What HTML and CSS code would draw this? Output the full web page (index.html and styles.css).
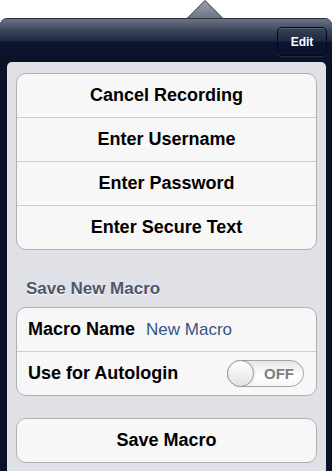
FILE: index.html
```html
<!doctype html>
<html>
<head>
  <meta charset="utf-8">
  <title>Macros</title>
  <link rel="stylesheet" href="styles.css">
</head>
<body>
  <div class="popover">
    <div class="arrow-row">
      <svg class="arrow" width="36" height="18" viewBox="0 0 36 18">
        <defs>
          <linearGradient id="arrowFill" x1="0" y1="0" x2="0" y2="1">
            <stop offset="0" stop-color="#9aa0ac"/>
            <stop offset="1" stop-color="#6c7486"/>
          </linearGradient>
        </defs>
        <polygon points="0,18.5 18,0.5 36,18.5" fill="url(#arrowFill)" stroke="#2a2f3a" stroke-width="1"/>
      </svg>
    </div>

    <div class="frame">
      <div class="header">
        <button class="edit-button">Edit</button>
      </div>

      <div class="content">
        <!-- Recording actions -->
        <div class="group">
          <div class="cell centered">Cancel Recording</div>
          <div class="cell centered">Enter Username</div>
          <div class="cell centered">Enter Password</div>
          <div class="cell centered">Enter Secure Text</div>
        </div>

        <div class="section-title">Save New Macro</div>
        <div class="group">
          <div class="cell">
            <span class="label">Macro Name</span>
            <span class="value">New Macro</span>
          </div>
          <div class="cell">
            <span class="label">Use for Autologin</span>
            <div class="switch">
              <div class="knob"></div>
              <span class="switch-text">OFF</span>
            </div>
          </div>
        </div>

        <div class="group save-group">
          <div class="cell centered">Save Macro</div>
        </div>
      </div>
    </div>
  </div>
</body>
</html>
```

FILE: styles.css
```css
body {
  margin: 0;
  background-color: #ffffff;
  font-family: "Liberation Sans", Arial, sans-serif;
  width: 335px;
  height: 471px;
  overflow: hidden;
}
.popover {
  display: flex;
  flex-direction: column;
  height: 471px;
}
.arrow-row {
  height: 18px;
  padding-left: 187px;
}
.arrow {
  display: block;
}
.frame {
  flex: 1;
  margin-right: 3px;
  background-color: #0a1228;
  border-radius: 7px 7px 0 0;
  border-top: 1px solid #2a2f3a;
  display: flex;
  flex-direction: column;
}
.header {
  height: 43px;
  background: linear-gradient(to bottom, #6c7486 0px, #3a4459 12px, #1d2740 22px, #0c1530 23px, #0a1228 43px);
  border-radius: 6px 6px 0 0;
  display: flex;
  justify-content: flex-end;
  align-items: flex-start;
  padding-right: 5px;
}
.edit-button {
  margin-top: 8px;
  width: 50px;
  height: 29px;
  border: 1px solid #050912;
  border-radius: 5px;
  background: linear-gradient(to bottom, #3b4558 0px, #1e283e 13px, #0b1431 14px, #0a1230 28px);
  box-shadow: inset 0 1px 0 rgba(255, 255, 255, 0.15), 0 1px 0 rgba(255, 255, 255, 0.12);
  color: #ffffff;
  font-family: "Liberation Sans", Arial, sans-serif;
  font-size: 12px;
  font-weight: bold;
  padding: 0;
}
.content {
  flex: 1;
  margin: 0 6px 0 7px;
  background-color: #dfe1e6;
  border-radius: 5px 5px 0 0;
  padding: 11px 9px 0 9px;
}
.group {
  background-color: #f7f7f7;
  border: 1px solid #aeb0b5;
  border-radius: 10px;
}
.cell {
  height: 43px;
  border-top: 1px solid #cdcdcf;
  display: flex;
  align-items: center;
  padding: 0 11px;
  font-size: 18px;
  font-weight: bold;
  color: #000000;
}
.cell:first-child {
  border-top: none;
  height: 43px;
}
.cell.centered {
  justify-content: center;
}
.section-title {
  margin: 30px 0 9px 10px;
  font-size: 17px;
  font-weight: bold;
  color: #4d566b;
  line-height: 18px;
  text-shadow: 0 1px 0 #ffffff;
}
.label {
  margin-right: 11px;
}
.value {
  font-size: 17px;
  font-weight: normal;
  color: #385487;
}
.switch {
  margin-left: auto;
  margin-right: 1px;
  width: 75px;
  height: 25px;
  border: 1px solid #a2a2a2;
  border-radius: 14px;
  background: linear-gradient(to bottom, #e6e6e6, #ffffff 60%, #f6f6f6);
  display: flex;
  align-items: center;
  position: relative;
}
.knob {
  width: 25px;
  height: 25px;
  margin-left: -1px;
  border: 1px solid #9a9a9a;
  border-radius: 50%;
  background: linear-gradient(to bottom, #ffffff, #e2e2e2);
  box-shadow: 1px 0 1px rgba(0, 0, 0, 0.1);
}
.switch-text {
  margin-left: 10px;
  font-size: 15px;
  font-weight: bold;
  color: #7f7f7f;
}
.save-group {
  margin-top: 22px;
}
```
